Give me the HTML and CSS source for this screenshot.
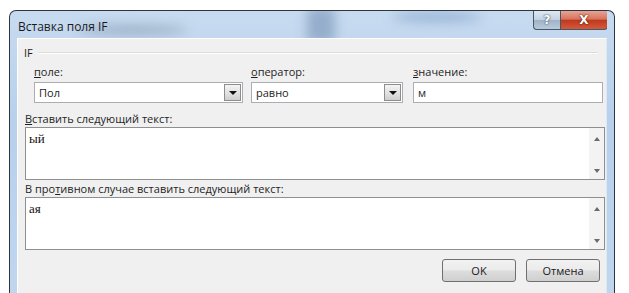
FILE: index.html
```html
<!DOCTYPE html>
<html lang="ru">
<head>
    <meta charset="UTF-8">
    <title>Вставка поля IF</title>
<link rel="stylesheet" href="styles.css">
</head>

<body>
    <div class="window">
        <div class="titlebar">
            <span class="blur blur-a"></span>
            <span class="blur blur-b"></span>
            <span class="blur blur-c"></span>
            <span class="title">Вставка поля IF</span>
            <div class="caption-buttons">
                <span class="cap-btn help">?</span>
                <span class="cap-btn close">X</span>
            </div>
        </div>

        <div class="client">
            <div class="group-title">
                <span>IF</span>
                <span class="rule"></span>
            </div>

            <div class="fields">
                <div class="field">
                    <label><u>п</u>оле:</label>
                    <div class="combo">
                        <span>Пол</span>
                        <span class="drop"></span>
                    </div>
                </div>
                <div class="field">
                    <label><u>о</u>ператор:</label>
                    <div class="combo">
                        <span>равно</span>
                        <span class="drop"></span>
                    </div>
                </div>
                <div class="field">
                    <label><u>з</u>начение:</label>
                    <div class="edit">м</div>
                </div>
            </div>

            <label class="block-label"><u>В</u>ставить следующий текст:</label>
            <div class="memo">
                <div class="memo-text">ый</div>
                <div class="scroll">
                    <span class="arrow up"></span>
                    <span class="arrow down"></span>
                </div>
            </div>

            <label class="block-label second">В про<u>т</u>ивном случае вставить следующий текст:</label>
            <div class="memo">
                <div class="memo-text">ая</div>
                <div class="scroll">
                    <span class="arrow up"></span>
                    <span class="arrow down"></span>
                </div>
            </div>

            <div class="actions">
                <button class="btn">OK</button>
                <button class="btn">Отмена</button>
            </div>
        </div>
    </div>
</body>
</html>
```

FILE: styles.css
```css
body {
    margin: 0;
    padding: 0;
    background-color: #ffffff;
    font-family: 'Open Sans', 'Noto Sans', sans-serif;
    font-size: 11px;
    color: #1e1e1e;
    overflow: hidden;
}

.window {
    margin: 10px 0 0 9px;
    width: 606px;
    height: 283px;
    border: 1px solid #2f3540;
    border-bottom: none;
    border-radius: 7px 7px 0 0;
    background: linear-gradient(180deg, #c7dbf0 0%, #b7d0ec 40%, #c0d6ef 100%);
    padding: 0 7px;
    box-sizing: border-box;
    display: flex;
    flex-direction: column;
}

.titlebar {
    position: relative;
    height: 27px;
    flex-shrink: 0;
    display: flex;
    justify-content: space-between;
    align-items: flex-start;
    overflow: hidden;
}

.blur {
    position: absolute;
    border-radius: 50%;
    filter: blur(6px);
}

.blur-a {
    left: 60px;
    top: 14px;
    width: 110px;
    height: 10px;
    background: rgba(80, 95, 120, 0.35);
}

.blur-b {
    left: 290px;
    top: -4px;
    width: 28px;
    height: 36px;
    border-radius: 4px;
    background: rgba(90, 120, 160, 0.45);
}

.blur-c {
    left: 375px;
    top: 2px;
    width: 90px;
    height: 8px;
    background: rgba(70, 110, 170, 0.45);
}

.title {
    position: relative;
    margin: 7px 0 0 1px;
    font-size: 12px;
    color: #1a1a1a;
}

.caption-buttons {
    position: relative;
    display: flex;
    margin-right: -1px;
}

.cap-btn {
    height: 18px;
    display: flex;
    align-items: center;
    justify-content: center;
    color: #ffffff;
    font-family: 'DejaVu Sans', sans-serif;
    font-weight: bold;
    border: 1px solid #4a5566;
    border-top: none;
    box-sizing: content-box;
}

.help {
    width: 26px;
    font-size: 12px;
    border-radius: 0 0 0 4px;
    border-right: none;
    background: linear-gradient(180deg, #dfe8f1 0%, #c4d3e2 48%, #9fb3c8 52%, #b9cadb 100%);
    text-shadow: 0 0 2px #44546a, 0 0 1px #44546a;
}

.close {
    width: 46px;
    font-size: 12px;
    border-radius: 0 0 4px 0;
    background: linear-gradient(180deg, #e8a493 0%, #d8735e 45%, #c1391c 52%, #d35a3c 100%);
    text-shadow: 0 0 2px #5a1808, 0 0 1px #5a1808;
}

.client {
    flex: 1;
    background-color: #f0f0f0;
    border: 1px solid #ffffff;
    border-right-color: #dfe8f2;
    border-bottom: none;
    padding: 6px 4px 0 6px;
}

.group-title {
    display: flex;
    align-items: center;
    gap: 5px;
    height: 15px;
}

.rule {
    flex: 1;
    height: 0;
    border-top: 1px solid #dcdcdc;
    border-bottom: 1px solid #ffffff;
    margin-right: 4px;
}

.fields {
    display: grid;
    grid-template-columns: 209px 152px 192px;
    column-gap: 8px;
    margin: 5px 0 0 10px;
}

.fields .field:last-child {
    margin-left: 2px;
}

.field label {
    display: block;
    height: 16px;
    line-height: 14px;
    margin-bottom: 1px;
}

.combo,
.edit {
    height: 21px;
    border: 1px solid #abadb3;
    background-color: #ffffff;
    box-sizing: border-box;
    display: flex;
    align-items: center;
    justify-content: space-between;
    padding-left: 4px;
}

.drop {
    width: 15px;
    height: 15px;
    margin-right: 1px;
    border: 1px solid #8d8d8d;
    background: linear-gradient(180deg, #f4f4f4 0%, #e2e2e2 50%, #cfcfcf 100%);
    position: relative;
}

.drop::after {
    content: "";
    position: absolute;
    left: 4px;
    top: 6px;
    border-left: 4px solid transparent;
    border-right: 4px solid transparent;
    border-top: 4px solid #111111;
}

.block-label {
    display: block;
    margin: 9px 0 0 1px;
    height: 15px;
    line-height: 14px;
}

.block-label.second {
    margin-top: 2px;
}

.memo {
    margin: 0 0 0 1px;
    width: 580px;
    height: 53px;
    border: 1px solid #8e8f8f;
    background-color: #ffffff;
    box-sizing: border-box;
    display: flex;
}

.memo-text {
    flex: 1;
    padding: 3px 0 0 3px;
    font-family: 'Liberation Serif', serif;
    font-size: 13px;
    color: #111111;
}

.scroll {
    width: 15px;
    background-color: #f3f3f3;
    display: flex;
    flex-direction: column;
    justify-content: space-between;
    align-items: center;
    padding: 9px 0 6px;
}

.arrow {
    width: 0;
    height: 0;
    border-left: 3px solid transparent;
    border-right: 3px solid transparent;
}

.arrow.up {
    border-bottom: 4px solid #6a6a6a;
}

.arrow.down {
    border-top: 4px solid #6a6a6a;
}

.actions {
    display: flex;
    justify-content: flex-end;
    gap: 10px;
    margin: 9px 2px 0 0;
}

.btn {
    width: 74px;
    height: 23px;
    font-family: 'Open Sans', 'Noto Sans', sans-serif;
    font-size: 11px;
    color: #1a1a1a;
    border: 1px solid #707070;
    border-radius: 3px;
    background: linear-gradient(180deg, #f2f2f2 0%, #ebebeb 48%, #dddddd 52%, #cfcfcf 100%);
    padding: 0;
}
```
